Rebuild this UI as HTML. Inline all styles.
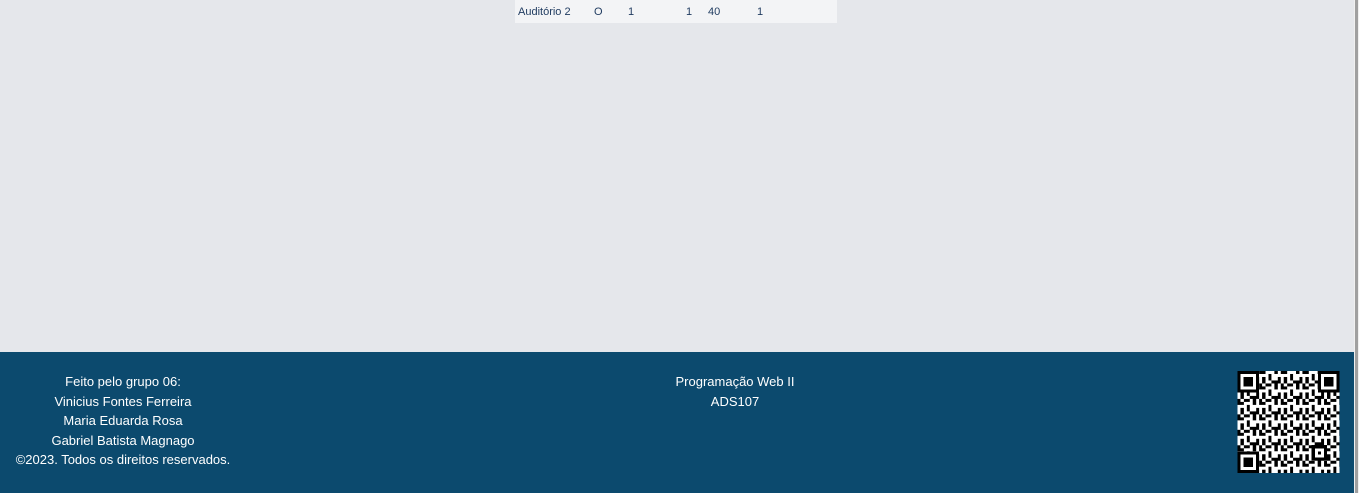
<!DOCTYPE html>
<html><head><meta charset="utf-8"><style>
html,body{margin:0;padding:0;width:1359px;height:493px;overflow:hidden;background:#e5e7eb;font-family:"Liberation Sans",sans-serif;}
.row{position:absolute;left:515px;top:0;width:322px;height:23px;background:#f3f4f6;font-size:11px;color:#1e3a5f;}
.row span{position:absolute;top:6px;}
footer{position:absolute;left:0;top:352px;width:1354px;height:141px;background:#0c4a6e;color:#fff;font-size:13px;line-height:19.5px;}
.l{position:absolute;left:0;width:246px;top:20px;text-align:center;}
.c{position:absolute;left:635px;width:200px;top:20px;text-align:center;}
.sb{position:absolute;left:1354px;top:0;width:5px;height:493px;background:#f0f0f0;}
.sb div{position:absolute;left:1px;top:0;width:3px;height:493px;background:#a0a0a0;}
svg{position:absolute;left:1237px;top:371px;}
</style></head><body>
<div class="row"><span style="left:3px">Auditório 2</span><span style="left:79px">O</span><span style="left:113px">1</span><span style="left:171px">1</span><span style="left:193px">40</span><span style="left:242px">1</span></div>
<footer>
<div class="l">Feito pelo grupo 06:<br>Vinicius Fontes Ferreira<br>Maria Eduarda Rosa<br>Gabriel Batista Magnago<br>©2023. Todos os direitos reservados.</div>
<div class="c">Programação Web II<br>ADS107</div>
</footer>
<svg width="103" height="102" viewBox="0 0 33 33" shape-rendering="crispEdges">
<defs><pattern id="p" width="7" height="5" patternUnits="userSpaceOnUse">
<rect width="7" height="5" fill="#fff"/>
<rect x="0" y="0" width="2" height="1"/><rect x="3" y="1" width="1" height="2"/><rect x="5" y="0" width="1" height="1"/><rect x="1" y="2" width="1" height="2"/><rect x="4" y="3" width="2" height="1"/><rect x="6" y="2" width="1" height="2"/><rect x="2" y="4" width="2" height="1"/><rect x="0" y="4" width="1" height="1"/><rect x="5" y="4" width="1" height="1"/>
</pattern></defs>
<rect width="33" height="33" fill="url(#p)"/>
<g><rect x="0" y="0" width="7" height="7"/><rect x="1" y="1" width="5" height="5" fill="#fff"/><rect x="2" y="2" width="3" height="3"/>
<rect x="26" y="0" width="7" height="7"/><rect x="27" y="1" width="5" height="5" fill="#fff"/><rect x="28" y="2" width="3" height="3"/>
<rect x="0" y="26" width="7" height="7"/><rect x="1" y="27" width="5" height="5" fill="#fff"/><rect x="2" y="28" width="3" height="3"/>
<rect x="24" y="24" width="5" height="5"/><rect x="25" y="25" width="3" height="3" fill="#fff"/><rect x="26" y="26" width="1" height="1"/></g>
</svg>
<div class="sb"><div></div></div>
</body></html>
